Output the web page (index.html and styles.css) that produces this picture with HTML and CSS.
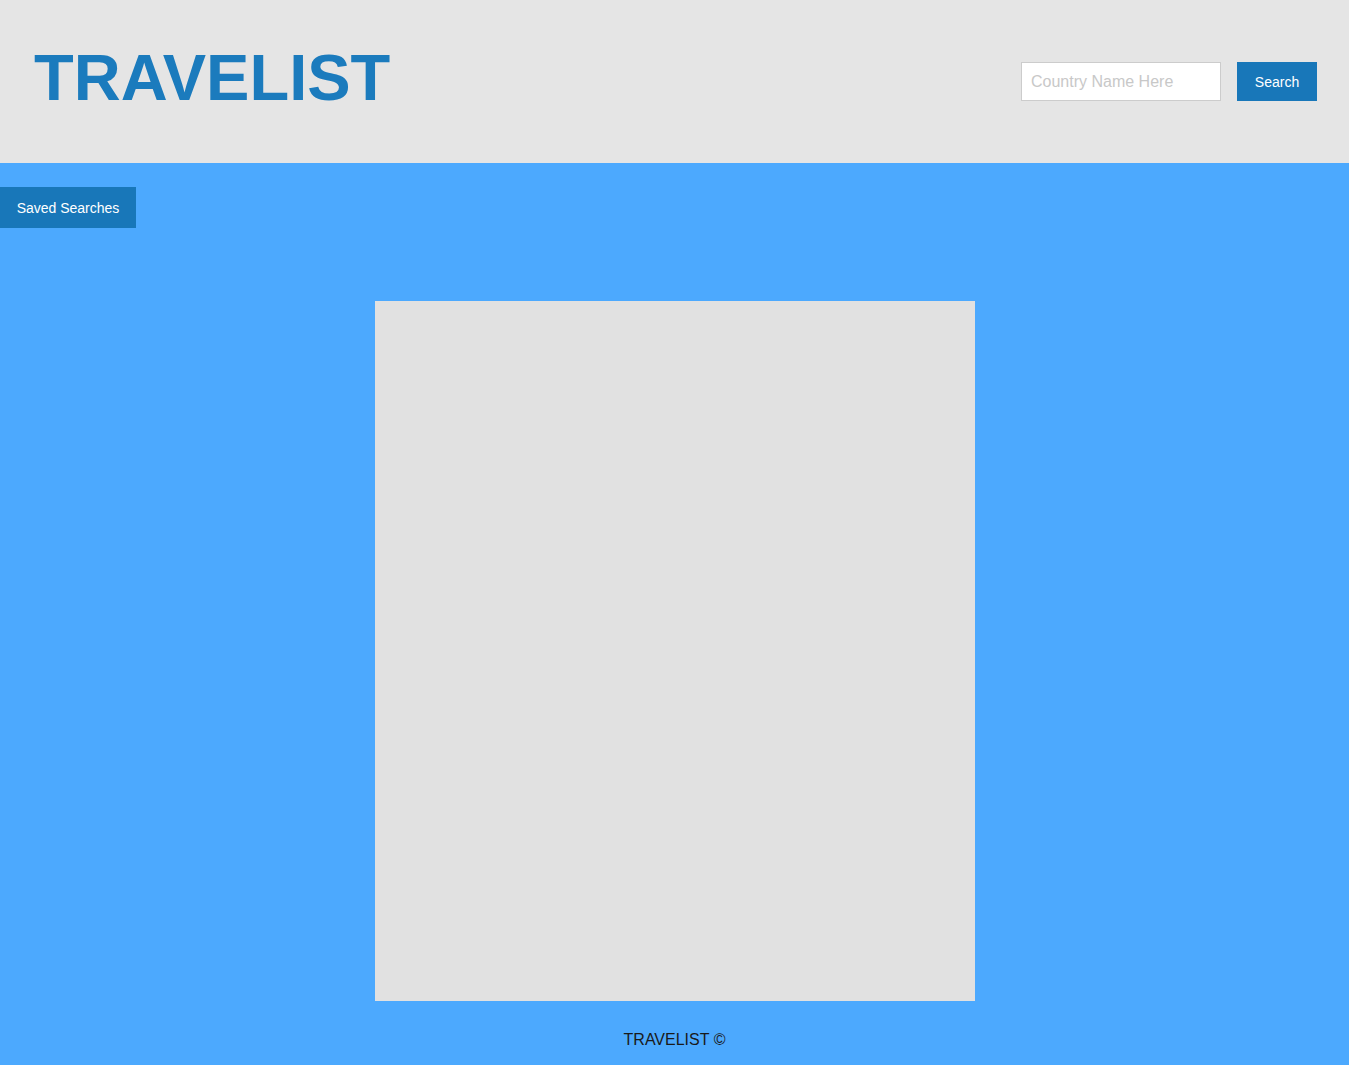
FILE: index.html
```html
<!DOCTYPE html>
<html lang="en">
<head>
<meta charset="utf-8">
<title>Travelist</title>
<link rel="stylesheet" href="styles.css">
</head>
<body>
<header class="site-header">
  <h1 class="logo">TRAVELIST</h1>
  <form class="search">
    <input class="search-input" type="text" placeholder="Country Name Here">
    <button class="search-btn" type="button">Search</button>
  </form>
</header>
<main class="main">
  <button class="saved-btn" type="button">Saved Searches</button>
  <div class="card"></div>
  <footer class="footer">TRAVELIST ©</footer>
</main>
</body>
</html>
```

FILE: styles.css
```css
* { box-sizing: border-box; }
html, body {
  margin: 0;
  padding: 0;
  font-family: "Liberation Sans", Arial, sans-serif;
  background: #4ca9fe;
}
.site-header {
  display: flex;
  justify-content: space-between;
  align-items: flex-start;
  height: 163px;
  padding: 46px 32px 0 34px;
  background: #e5e5e5;
}
.logo {
  margin: 0;
  font-size: 65px;
  line-height: 64px;
  font-weight: bold;
  color: #1b7bbd;
}
.search {
  display: flex;
  gap: 16px;
  margin: 16px 0 0 0;
}
.search-input {
  width: 200px;
  height: 39px;
  border: 1px solid #cccccc;
  padding: 0 9px;
  font-family: inherit;
  font-size: 16px;
  background: #fff;
  outline: none;
}
.search-input::placeholder { color: #c8c8c8; }
.search-btn {
  width: 80px;
  height: 39px;
  border: none;
  background: #1877b9;
  color: #fff;
  font-family: inherit;
  font-size: 14px;
  padding: 0;
}
.main {
  display: flex;
  flex-direction: column;
  align-items: center;
  padding-top: 24px;
}
.saved-btn {
  align-self: flex-start;
  width: 136px;
  height: 41px;
  padding: 0;
  border: none;
  background: #1877b9;
  color: #fff;
  font-family: inherit;
  font-size: 14px;
}
.card {
  width: 600px;
  height: 700px;
  margin-top: 73px;
  background: #e1e1e1;
}
.footer {
  margin-top: 30px;
  padding-bottom: 20px;
  font-size: 16px;
  line-height: 18px;
  color: #1a1a1a;
}
```
